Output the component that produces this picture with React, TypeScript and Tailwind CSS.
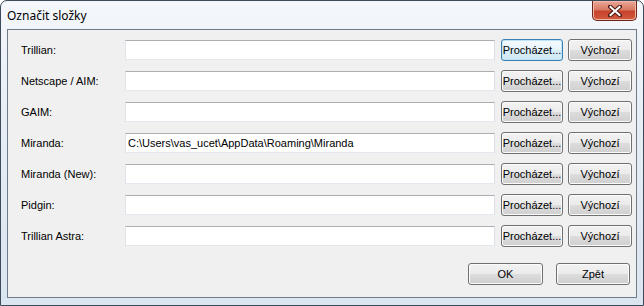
const rows = [
  { label: 'Trillian:', value: '', focused: true },
  { label: 'Netscape / AIM:', value: '' },
  { label: 'GAIM:', value: '' },
  { label: 'Miranda:', value: 'C:\\Users\\vas_ucet\\AppData\\Roaming\\Miranda' },
  { label: 'Miranda (New):', value: '' },
  { label: 'Pidgin:', value: '' },
  { label: 'Trillian Astra:', value: '' },
]

const btn =
  'h-[22px] rounded-[3px] border border-[#707070] bg-[linear-gradient(#f2f2f2_0%,#ebebeb_50%,#dddddd_50%,#cfcfcf_100%)] shadow-[inset_0_0_0_1px_#fbfbfb] text-[11px] text-black flex items-center justify-center'
const btnFocus =
  'h-[22px] rounded-[3px] border border-[#3c7fb1] bg-[linear-gradient(#f4fafd_0%,#e8f4fb_50%,#d9eef9_50%,#cfe8f6_100%)] shadow-[inset_0_0_0_1px_#bfe4f8] text-[11px] text-black flex items-center justify-center'

function CloseButton() {
  return (
    <div className="w-[45px] h-[20px] rounded-b-[5px] border border-t-0 border-[#6d2419] bg-[linear-gradient(#e9a99a_0%,#d97a64_45%,#c7442b_55%,#d05a3f_100%)] shadow-[inset_0_0_0_1px_#f1b9a9] flex items-center justify-center">
      <svg width="14" height="12" viewBox="0 0 14 12">
        <path d="M2 1.5 L12 10.5 M12 1.5 L2 10.5" stroke="#4a1a12" strokeWidth="4" strokeLinecap="square" />
        <path d="M2.5 2 L11.5 10 M11.5 2 L2.5 10" stroke="#ffffff" strokeWidth="2" strokeLinecap="square" />
      </svg>
    </div>
  )
}

export default function App() {
  return (
    <div className="w-[644px] h-[306px] flex flex-col rounded-t-[7px] border border-[#3d4a5a] bg-[linear-gradient(180deg,#f4f7fb_0%,#e6edf5_40%,#dbe5f0_100%)] font-['Liberation_Sans',Arial,sans-serif] overflow-hidden">
      <div className="h-[28px] flex items-start justify-between pl-[6px] pr-[6px]">
        <div className="pt-[6px] text-[12px] text-black font-['Noto_Sans','Open_Sans',sans-serif]">Označit složky</div>
        <CloseButton />
      </div>
      <div className="mx-[6px] h-[269px] border border-[#6f7b89] bg-[#f0f0f0] pt-[9px] pl-[13px] pr-[4px] flex flex-col gap-[9px]">
        {rows.map(r => (
          <div key={r.label} className="flex items-center h-[22px]">
            <div className="w-[104px] text-[11px] text-black">{r.label}</div>
            <div className="w-[370px] h-[20px] bg-white border border-[#dbdfe6] border-t-[#abadb3] border-l-[#e2e3ea] border-b-[#e3e9ef] pl-[2px] text-[11px] text-black flex items-center leading-none">
              {r.value}
            </div>
            <div className={`ml-[6px] w-[62px] ${r.focused ? btnFocus : btn}`}>Procházet...</div>
            <div className={`ml-[5px] w-[64px] ${btn}`}>Výchozí</div>
          </div>
        ))}
        <div className="flex justify-end gap-[13px] pr-[2px] mt-[7px]">
          <div className={`w-[75px] ${btn}`}>OK</div>
          <div className={`w-[74px] ${btn}`}>Zpět</div>
        </div>
      </div>
    </div>
  )
}
